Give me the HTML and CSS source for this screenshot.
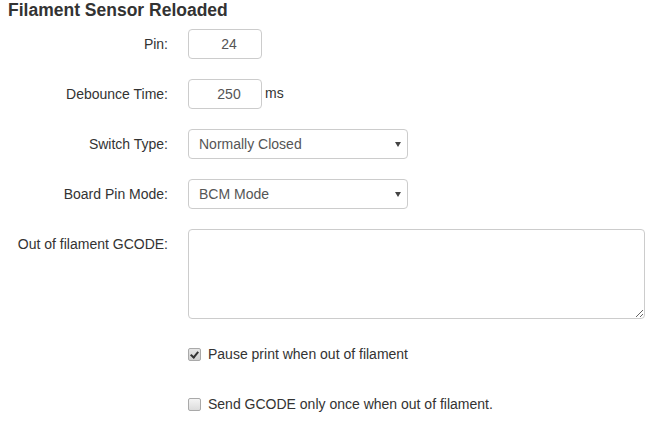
FILE: index.html
```html
<!DOCTYPE html>
<html>
<head>
<meta charset="utf-8">
<link rel="stylesheet" href="styles.css">
</head>
<body>
<h3 class="title">Filament Sensor Reloaded</h3>
<form class="form">
  <div class="group">
    <label class="label">Pin:</label>
    <div class="controls"><input class="num" type="text" value="24"></div>
  </div>
  <div class="group">
    <label class="label">Debounce Time:</label>
    <div class="controls"><input class="num" type="text" value="250"> <span class="unit">ms</span></div>
  </div>
  <div class="group">
    <label class="label">Switch Type:</label>
    <div class="controls"><span class="select-wrap"><select class="select"><option>Normally Closed</option></select></span></div>
  </div>
  <div class="group">
    <label class="label">Board Pin Mode:</label>
    <div class="controls"><span class="select-wrap"><select class="select"><option>BCM Mode</option></select></span></div>
  </div>
  <div class="group">
    <label class="label">Out of filament GCODE:</label>
    <div class="controls"><textarea class="area"></textarea></div>
  </div>
  <div class="group">
    <div class="controls check-row"><label class="checkbox"><input class="box" type="checkbox" checked> Pause print when out of filament</label></div>
  </div>
  <div class="group">
    <div class="controls check-row"><label class="checkbox"><input class="box" type="checkbox"> Send GCODE only once when out of filament.</label></div>
  </div>
</form>
</body>
</html>
```
FILE: styles.css
```css
html, body {
  margin: 0;
  background: #fff;
}
body {
  padding: 0 8px;
  font-family: "Liberation Sans", Arial, sans-serif;
  font-size: 14px;
  line-height: 20px;
  color: #333;
}
.title {
  margin: 0 0 9px 0;
  font-size: 17.5px;
  line-height: 20px;
  font-weight: bold;
  color: #333;
}
.form {
  margin: 0;
}
.group {
  display: grid;
  grid-template-columns: 160px 1fr;
  column-gap: 20px;
  margin-bottom: 20px;
}
.label {
  padding-top: 5px;
  text-align: right;
  color: #333;
}
.controls {
  grid-column: 2;
  display: flex;
  align-items: center;
  min-height: 30px;
}
.num {
  box-sizing: border-box;
  width: 74px;
  height: 30px;
  padding: 4px 6px 4px 14px;
  border: 1px solid #ccc;
  border-radius: 4px;
  font-family: inherit;
  font-size: 14px;
  line-height: 20px;
  color: #555;
  text-align: center;
  margin: 0;
  outline: none;
}
.unit {
  margin-left: 3px;
  align-self: flex-start;
  padding-top: 4px;
}
.select-wrap {
  position: relative;
  display: inline-block;
}
.select-wrap::after {
  content: "";
  position: absolute;
  right: 7px;
  top: 13px;
  border-left: 3px solid transparent;
  border-right: 3px solid transparent;
  border-top: 5px solid #444;
  pointer-events: none;
}
.select {
  appearance: none;
  -webkit-appearance: none;
  box-sizing: border-box;
  width: 220px;
  height: 30px;
  margin: 0;
  padding: 4px 20px 4px 10px;
  border: 1px solid #ccc;
  border-radius: 4px;
  background: #fff;
  font-family: inherit;
  font-size: 14px;
  line-height: 20px;
  color: #555;
  outline: none;
}
.area {
  box-sizing: border-box;
  width: 457px;
  height: 90px;
  margin: 0;
  padding: 4px 6px;
  border: 1px solid #ccc;
  border-radius: 4px;
  font-family: inherit;
  font-size: 14px;
  color: #555;
  outline: none;
}
.check-row {
  min-height: 30px;
  align-items: flex-start;
}
.checkbox {
  display: block;
  padding: 5px 0 5px 20px;
  position: relative;
  color: #333;
}
.box {
  appearance: none;
  -webkit-appearance: none;
  position: absolute;
  left: 0;
  top: 9px;
  width: 13px;
  height: 13px;
  margin: 0;
  box-sizing: border-box;
  border: 1px solid #a9a9a9;
  border-radius: 2px;
  background: linear-gradient(#f4f4f4, #dcdcdc);
}
.box:checked {
  background: linear-gradient(#e6e6e6, #d0d0d0);
}
.box:checked::after {
  content: "";
  position: absolute;
  left: 3px;
  top: 1px;
  width: 3px;
  height: 6px;
  border-right: 2px solid #333;
  border-bottom: 2px solid #333;
  transform: rotate(40deg);
}
```
